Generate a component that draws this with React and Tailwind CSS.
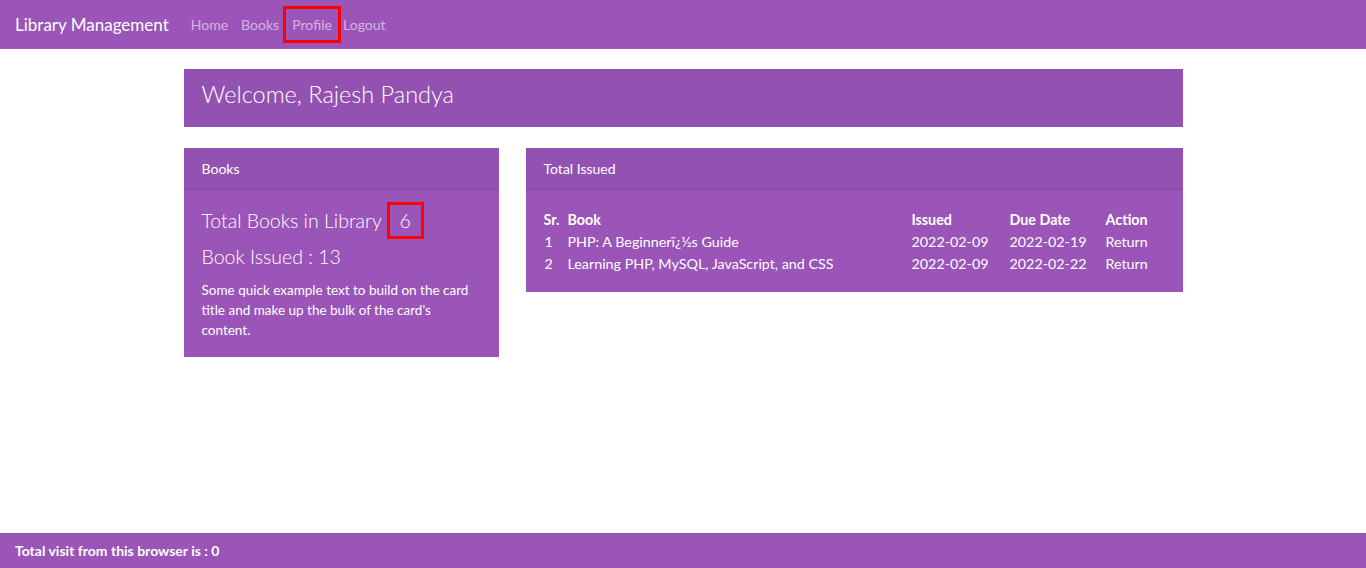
import React from 'react';

const rows = [
  { sr: 1, book: 'PHP: A Beginnerï¿½s Guide', issued: '2022-02-09', due: '2022-02-19' },
  { sr: 2, book: 'Learning PHP, MySQL, JavaScript, and CSS', issued: '2022-02-09', due: '2022-02-22' },
];

const App = () => {
  return (
    <div className="min-h-screen flex flex-col bg-white text-white font-['Lato','Open_Sans',sans-serif]">
      {/* Navbar */}
      <nav className="h-[49px] bg-[#9b54b8] flex items-center px-[15px]">
        <span className="text-[17px] text-white mr-[22px]">Library Management</span>
        <div className="flex items-center text-[14px] text-white/55">
          <a className="mr-[13px]">Home</a>
          <a className="mr-[4px]">Books</a>
          <a className="h-[37px] w-[58px] flex items-center justify-center border-[3px] border-[#ff0000]">Profile</a>
          <a className="ml-[2px]">Logout</a>
        </div>
      </nav>

      {/* Content */}
      <main className="flex-1 w-[999px] mx-auto pt-[20px]">
        <div className="h-[58px] bg-[#9352b1] flex items-center px-[18px] pb-[6px]">
          <h1 className="text-[23.5px] font-light">Welcome, Rajesh Pandya</h1>
        </div>

        <div className="flex items-start gap-[27px] mt-[21px]">
          {/* Books card */}
          <div className="w-[315px] bg-[#9b54b8]">
            <div className="h-[42px] bg-[#9352b1] border-b border-[#8447a2] flex items-center px-[18px] text-[14px]">
              Books
            </div>
            <div className="px-[18px] pt-[12px] pb-[17px]">
              <div className="flex items-center h-[37px] text-[19.5px] font-light">
                <span>Total Books in Library</span>
                <span className="ml-[5px] w-[37px] h-[37px] border-[3px] border-[#ff0000] flex items-center justify-center">6</span>
              </div>
              <div className="mt-[6px] h-[24px] leading-[24px] text-[19.5px] font-light">Book Issued : 13</div>
              <p className="mt-[11px] text-[13.5px] leading-[20px]">
                Some quick example text to build on the card title and make up the bulk of the card's content.
              </p>
            </div>
          </div>

          {/* Total Issued card */}
          <div className="w-[657px] bg-[#9b54b8]">
            <div className="h-[42px] bg-[#9352b1] border-b border-[#8447a2] flex items-center px-[18px] text-[14px]">
              Total Issued
            </div>
            <div className="px-[18px] pt-[19px] pb-[17px] text-[14.3px]">
              <div className="grid grid-cols-[24px_344px_98px_96px_59px] leading-[22px] font-bold">
                <span>Sr.</span>
                <span>Book</span>
                <span>Issued</span>
                <span>Due Date</span>
                <span>Action</span>
              </div>
              {rows.map((r) => (
                <div key={r.sr} className="grid grid-cols-[24px_344px_98px_96px_59px] leading-[22px]">
                  <span className="pl-[1px]">{r.sr}</span>
                  <span>{r.book}</span>
                  <span>{r.issued}</span>
                  <span>{r.due}</span>
                  <span>Return</span>
                </div>
              ))}
            </div>
          </div>
        </div>
      </main>

      {/* Footer */}
      <footer className="h-[35px] bg-[#9b54b8] flex items-center px-[15px] text-[14px] font-bold">
        Total visit from this browser is : 0
      </footer>
    </div>
  );
};

export default App;
